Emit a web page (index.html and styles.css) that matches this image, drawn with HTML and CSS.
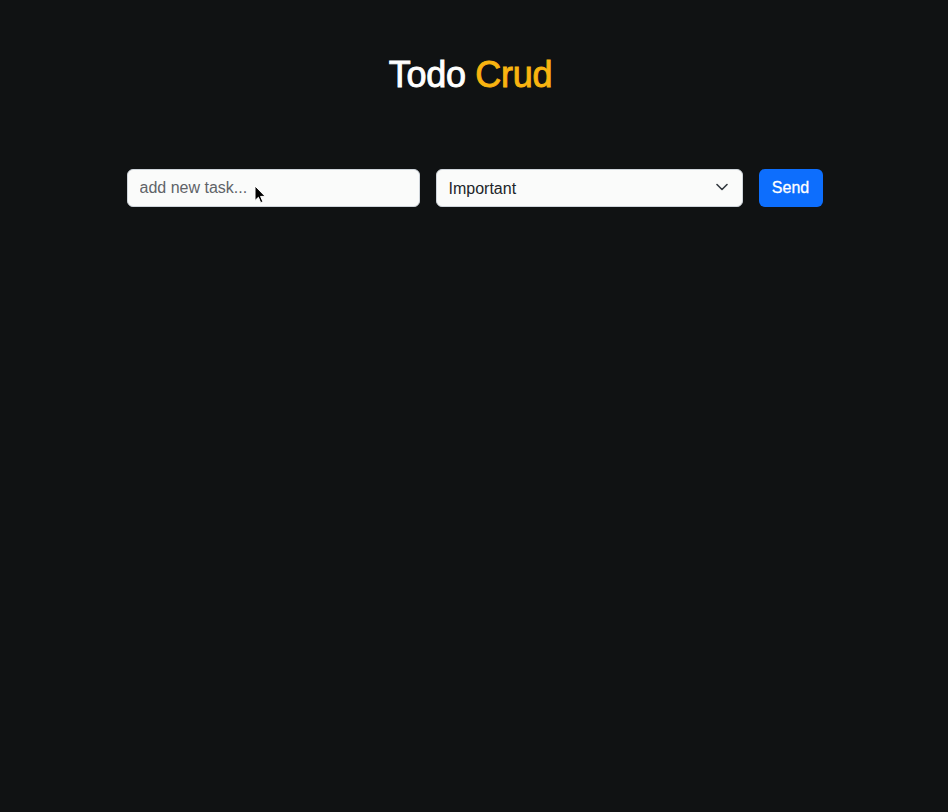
FILE: index.html
```html
<!DOCTYPE html>
<html lang="en">
<head>
<meta charset="utf-8">
<title>Todo Crud</title>
<link rel="stylesheet" href="styles.css">
</head>
<body>
<main class="app">
  <h1 class="title">Todo <span class="accent">Crud</span></h1>
  <form class="task-form">
    <div class="input-wrap">
      <input class="task-input" type="text" placeholder="add new task...">
      <svg class="cursor" width="12" height="19" viewBox="0 0 12 19"><path d="M1 1v14.5l3.4-3.2 2.3 5.4 2.2-1-2.3-5.3h4.6z" fill="#000" stroke="#fff" stroke-width="1" stroke-linejoin="round"/></svg>
    </div>
    <div class="select-wrap">
      <select class="task-select">
        <option>Important</option>
        <option>Normal</option>
      </select>
      <svg class="chev" width="12" height="8" viewBox="0 0 12 8"><path d="M1 1.5l5 5 5-5" fill="none" stroke="#343a40" stroke-width="1.6" stroke-linecap="round" stroke-linejoin="round"/></svg>
    </div>
    <button class="send" type="button">Send</button>
  </form>
</main>
</body>
</html>
```
FILE: styles.css
```css
html, body {
  margin: 0;
  height: 100%;
}
body {
  background: #101213;
  font-family: "Liberation Sans", Arial, sans-serif;
  color: #fff;
}
.app {
  width: 696px;
  margin: 0 auto;
  padding: 53px 0 0 1px;
}
.title {
  margin: 0;
  padding-right: 8px;
  text-align: center;
  font-size: 36px;
  font-weight: normal;
  line-height: 1.2;
  color: #fff;
  letter-spacing: -0.3px;
  -webkit-text-stroke: 0.9px currentColor;
}
.accent {
  color: #f9b410;
}
.task-form {
  margin-top: 73px;
  display: flex;
  gap: 16px;
  align-items: stretch;
  height: 38px;
}
.input-wrap {
  position: relative;
  width: 293px;
}
.task-input {
  width: 100%;
  height: 100%;
  box-sizing: border-box;
  border: 1px solid #ced4da;
  border-radius: 6px;
  background: #fafbfa;
  padding: 6px 12px;
  font: 16px "Liberation Sans", Arial, sans-serif;
  color: #212529;
  outline: none;
}
.task-input::placeholder {
  color: #5f6368;
}
.cursor {
  position: absolute;
  left: 127px;
  top: 16px;
  pointer-events: none;
}
.select-wrap {
  position: relative;
  width: 307px;
}
.task-select {
  appearance: none;
  -webkit-appearance: none;
  width: 100%;
  height: 100%;
  box-sizing: border-box;
  border: 1px solid #ced4da;
  border-radius: 6px;
  background: #fafbfa;
  padding: 6px 36px 6px 12px;
  font: 16px "Liberation Sans", Arial, sans-serif;
  color: #212529;
}
.chev {
  position: absolute;
  right: 15px;
  top: 14px;
  pointer-events: none;
}
.send {
  width: 64px;
  border: none;
  border-radius: 6px;
  background: #0d6efd;
  color: #fff;
  font: 16px "Liberation Sans", Arial, sans-serif;
  -webkit-text-stroke: 0.3px currentColor;
  padding: 0;
  cursor: pointer;
}
```
